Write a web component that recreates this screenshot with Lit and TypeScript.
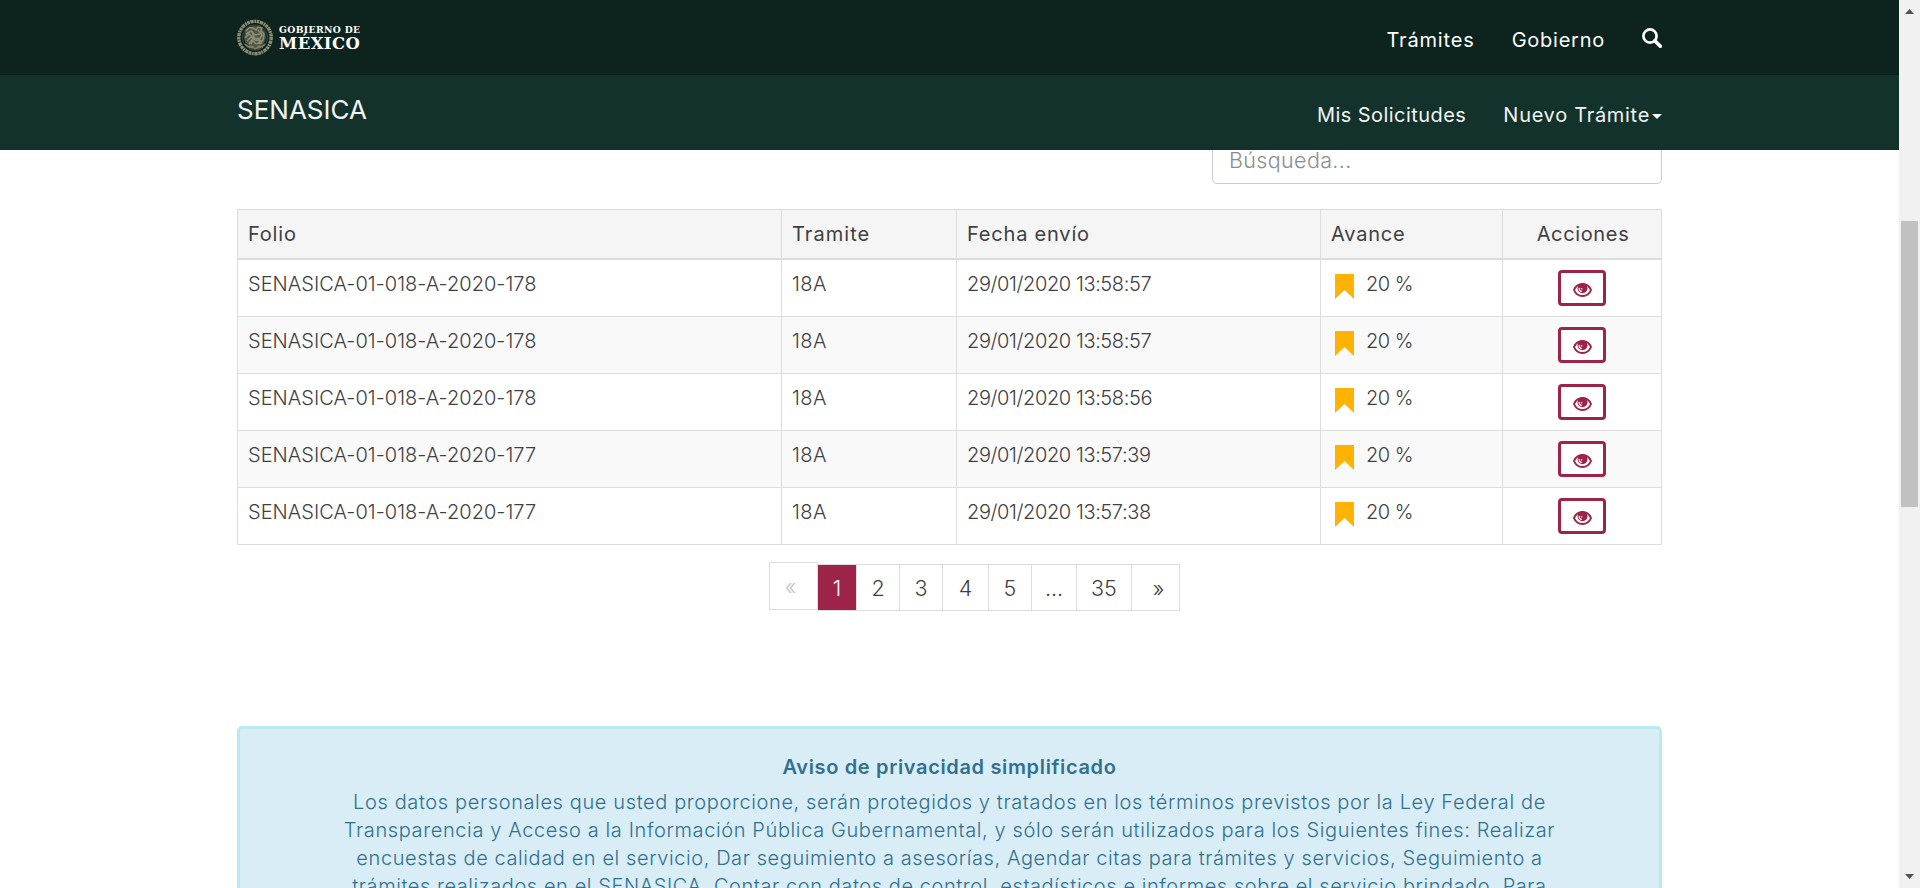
import { LitElement, html, css } from "lit";

interface Solicitud { folio: string; tramite: string; fecha: string; avance: number }

const SOLICITUDES: Solicitud[] = [
  { folio: "SENASICA-01-018-A-2020-178", tramite: "18A", fecha: "29/01/2020 13:58:57", avance: 20 },
  { folio: "SENASICA-01-018-A-2020-178", tramite: "18A", fecha: "29/01/2020 13:58:57", avance: 20 },
  { folio: "SENASICA-01-018-A-2020-178", tramite: "18A", fecha: "29/01/2020 13:58:56", avance: 20 },
  { folio: "SENASICA-01-018-A-2020-177", tramite: "18A", fecha: "29/01/2020 13:57:39", avance: 20 },
  { folio: "SENASICA-01-018-A-2020-177", tramite: "18A", fecha: "29/01/2020 13:57:38", avance: 20 },
];

class GovHeader extends LitElement {
  static styles = css`
    :host { display: block; position: relative; z-index: 1; color: #fff; font: 400 20px/28px Inter, sans-serif; }
    .bar { height: 75px; box-sizing: border-box; padding: 0 237px; display: flex; justify-content: space-between; }
    .top { background: #0c231e; }
    .sub { background: #13322b; color: #f2f4f3; }
    .logo { display: flex; align-items: center; gap: 6px; }
    .seal { display: block; margin-top: -1px; }
    .words { display: flex; flex-direction: column; font-family: "DejaVu Serif", serif; font-weight: 700; padding-top: 2px; }
    .gob { font-size: 9.2px; line-height: 10px; letter-spacing: 0.4px; }
    .mex { font-size: 16.4px; line-height: 18px; letter-spacing: 0.5px; }
    nav { display: flex; padding-top: 26px; }
    .sub nav { align-items: flex-start; }
    .n1 { letter-spacing: 0.85px; margin-right: 37px; }
    .n2 { letter-spacing: 0.75px; margin-right: 37px; }
    .n3 { letter-spacing: 0.45px; margin-right: 37px; }
    .n4 { letter-spacing: 0.7px; }
    .search { margin-top: 2px; display: block; }
    .caret { margin: 13px 0 0 2px; display: block; }
    .brand { font-size: 26px; line-height: 36px; padding-top: 17px; }
  `;
  render() {
    return html`
      <div class="bar top">
        <div class="logo">
          <svg class="seal" width="36" height="37" viewBox="0 0 36 37" fill="none" stroke="#8c8a70">
            <circle cx="18" cy="18.5" r="16.2" stroke-width="3.4" stroke-dasharray="2.6 .6 3.4 .7 1.8 .6"/>
            <path d="M8 12l5-4 5-1 5 1 5 5 1 6-3 7-6 3-7-1-5-5-1-5z" fill="#4d5647" stroke="none"/>
            <circle cx="18" cy="18.5" r="12.6" stroke-width=".8" stroke="#4d5647"/>
            <g stroke-width="1.5" stroke="#918e73">
              <path d="M9 12c2-3 5-4 7-3l3 2 2-3 4 1-1 3 3 3-1 6-4 4"/>
              <path d="M9 15l5-3 4 4 5-1M8 19l4-4 5 4 6 1M10 22l4-4 4 3 7 1M12 25l3-4 4 4 6-2"/>
              <path d="M21 11l4 5-3 5 2 4M15 12l2 7-3 6"/>
              <path d="M8 25c4 5 15 6 20 0M11 28l4-1 3 3 4-3 4 1" stroke="#7d7c65"/>
            </g>
          </svg>
          <div class="words"><span class="gob">GOBIERNO DE</span><span class="mex">MÉXICO</span></div>
        </div>
        <nav>
          <span class="n1">Trámites</span><span class="n2">Gobierno</span>
          <svg class="search" width="20" height="20" viewBox="0 0 20 20" fill="none" stroke="#fff">
            <circle cx="8" cy="8" r="6.6" stroke-width="2.7"/><path d="M12.8 12.8l5.5 5.5" stroke-width="3.6" stroke-linecap="round"/>
          </svg>
        </nav>
      </div>
      <div class="bar sub">
        <span class="brand">SENASICA</span>
        <nav>
          <span class="n3">Mis Solicitudes</span><span class="n4">Nuevo Trámite</span>
          <svg class="caret" width="10" height="5"><path d="M0 0h10l-5 5z" fill="#fff"/></svg>
        </nav>
      </div>`;
  }
}
customElements.define("gov-header", GovHeader);

class SolicitudesTable extends LitElement {
  static properties = { rows: { attribute: false } };
  declare rows: Solicitud[];
  static styles = css`
    :host { display: block; font: 300 20px/28px Inter, sans-serif; color: #404041; }
    .table { border: solid #ddd; border-width: 1px 0 0 1px; }
    .row { display: grid; grid-template-columns: 544px 175px 364px 182px 1fr; height: 57px; }
    .row:nth-child(odd) { background: #f9f9f9; }
    .row.head { height: 50px; background: #f5f5f5; font-weight: 400; }
    .cell { box-sizing: border-box; border: solid #ddd; border-width: 0 1px 1px 0; padding: 10px; white-space: nowrap; }
    .head .cell { border-bottom-width: 2px; }
    .a { letter-spacing: 0.03px; }
    .b { letter-spacing: 0.4px; }
    .c { letter-spacing: -0.4px; }
    .d { letter-spacing: -0.5px; display: flex; }
    .head .cell { letter-spacing: 0.8px; }
    .head .b { letter-spacing: 1.05px; }
    .head .act { letter-spacing: 0.65px; padding-left: 12px; }
    .act { text-align: center; }
    .flag { display: block; margin: 4px 12px 0 4px; }
    .btn { box-sizing: border-box; display: flex; align-items: center; justify-content: center; width: 48px; height: 36px; margin: 0 auto; padding: 3px 0 0; background: #fff; border: 3px solid #9d2449; border-radius: 4px; }
  `;
  render() {
    return html`<div class="table">
      <div class="row head">
        <div class="cell a">Folio</div><div class="cell b">Tramite</div><div class="cell c">Fecha envío</div>
        <div class="cell d">Avance</div><div class="cell act">Acciones</div>
      </div>
      ${this.rows.map(r => html`<div class="row">
        <div class="cell a">${r.folio}</div><div class="cell b">${r.tramite}</div><div class="cell c">${r.fecha}</div>
        <div class="cell d"><svg class="flag" width="19" height="25"><path d="M0 0h19v25l-9.5-9L0 25z" fill="#ffb300"/></svg>${r.avance} %</div>
        <div class="cell act"><button class="btn" aria-label="Ver">
          <svg width="19" height="14" viewBox="0 0 19 14">
            <path d="M1 7C2.600 3 6 1 9.500 1S16.400 3 18 7C16.400 11 13 13 9.500 13S2.600 11 1 7z" fill="#fff" stroke="#9d2449" stroke-width="2"/>
            <circle cx="9.500" cy="5.300" r="5" fill="#9d2449"/>
            <path d="M6.200 4.800c-.4 2.200.9 3.700 2.600 3.600" fill="none" stroke="#fff" stroke-width="1.200"/>
            <circle cx="8.600" cy="5.800" r=".8" fill="#fff"/>
          </svg></button></div>
      </div>`)}
    </div>`;
  }
}
customElements.define("solicitudes-table", SolicitudesTable);

class PageList extends LitElement {
  static styles = css`
    :host { display: flex; align-items: flex-end; justify-content: center; font: 300 21.5px/30px Inter, sans-serif; color: #404041; }
    .p { box-sizing: border-box; height: 47px; border: 1px solid #ddd; border-left: 0; padding-top: 8px; text-align: center; background: #fff; }
    .prev { width: 49px; height: 48px; border-left: 1px solid #ddd; color: #c4c4c4; margin-bottom: 1px; padding-right: 6px; }
    .active { width: 39px; background: #9d2449; color: #fff; }
    .w43 { width: 43px; }
    .w46 { width: 46px; }
    .w45 { width: 45px; }
    .w55 { width: 55px; }
    .next { width: 48px; padding-left: 6px; }
  `;
  render() {
    return html`<span class="p prev">«</span><span class="p active">1</span><span class="p w43">2</span><span class="p w43">3</span>
      <span class="p w46">4</span><span class="p w43">5</span><span class="p w45">...</span><span class="p w55">35</span><span class="p next">»</span>`;
  }
}
customElements.define("page-list", PageList);

class PrivacyNotice extends LitElement {
  static styles = css`
    :host { display: block; box-sizing: border-box; height: 260px; border: 3px solid #bce8f1; border-radius: 5px; background: #d9edf7; color: #31708f; font: 300 20px/28px Inter, sans-serif; text-align: center; padding-top: 24px; }
    .title { font-weight: 600; letter-spacing: 0.65px; margin-bottom: 7px; }
    .line { white-space: nowrap; letter-spacing: 0.62px; }
    .l3 { letter-spacing: 0.59px; }
    .l4 { letter-spacing: 0.57px; }
  `;
  render() {
    return html`<div class="title">Aviso de privacidad simplificado</div>
      <div class="line">Los datos personales que usted proporcione, serán protegidos y tratados en los términos previstos por la Ley Federal de</div>
      <div class="line">Transparencia y Acceso a la Información Pública Gubernamental, y sólo serán utilizados para los Siguientes fines: Realizar</div>
      <div class="line l3">encuestas de calidad en el servicio, Dar seguimiento a asesorías, Agendar citas para trámites y servicios, Seguimiento a</div>
      <div class="line l4">trámites realizados en el SENASICA, Contar con datos de control, estadísticos e informes sobre el servicio brindado. Para</div>`;
  }
}
customElements.define("privacy-notice", PrivacyNotice);

class AppRoot extends LitElement {
  static styles = css`
    :host { display: flex; height: 888px; overflow: hidden; background: #fff; font-family: Inter, sans-serif; }
    .page { width: 1899px; height: 888px; overflow: hidden; }
    .content { padding: 0 237px; }
    .search { box-sizing: border-box; margin: -16px 0 25px auto; width: 450px; height: 50px; border: 1px solid #ccc; border-radius: 5px; padding: 9px 16px; font-size: 21.5px; line-height: 32px; font-weight: 300; letter-spacing: 0.35px; color: #8c8c8c; }
    .pages { margin: 17px 0 115px 50px; }
    .scroll { width: 21px; background: #f1f1f1; display: flex; flex-direction: column; align-items: center; box-sizing: border-box; padding: 9px 0; }
    .thumb { width: 17px; height: 286px; background: #c1c1c1; margin: 207px 0 auto; }
    .arrow { display: block; }
  `;
  render() {
    return html`
      <div class="page">
        <gov-header></gov-header>
        <div class="content">
          <div class="search">Búsqueda...</div>
          <solicitudes-table .rows=${SOLICITUDES}></solicitudes-table>
          <page-list class="pages"></page-list>
          <privacy-notice></privacy-notice>
        </div>
      </div>
      <div class="scroll">
        <svg class="arrow" width="9" height="5"><path d="M0 5h9L4.5 0z" fill="#505050"/></svg>
        <div class="thumb"></div>
        <svg class="arrow" width="9" height="5"><path d="M0 0h9L4.5 5z" fill="#505050"/></svg>
      </div>`;
  }
}
customElements.define("app-root", AppRoot);
